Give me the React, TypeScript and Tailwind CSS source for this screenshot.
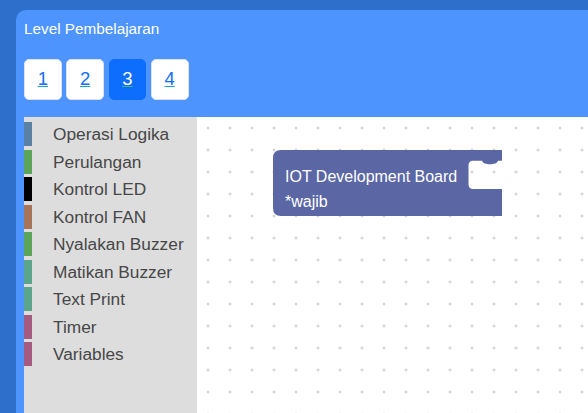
const levels = ["1", "2", "3", "4"];

const categories = [
  { name: "Operasi Logika", color: "bg-[#5b80a5]" },
  { name: "Perulangan", color: "bg-[#5ba55b]" },
  { name: "Kontrol LED", color: "bg-[#000000]" },
  { name: "Kontrol FAN", color: "bg-[#a5745b]" },
  { name: "Nyalakan Buzzer", color: "bg-[#5ba55b]" },
  { name: "Matikan Buzzer", color: "bg-[#5ba58c]" },
  { name: "Text Print", color: "bg-[#5ba58c]" },
  { name: "Timer", color: "bg-[#a55b80]" },
  { name: "Variables", color: "bg-[#a55b80]" },
];

function GridDots() {
  return (
    <svg className="absolute inset-0 h-full w-full" aria-hidden>
      <defs>
        <pattern id="dots" width="22" height="22" patternUnits="userSpaceOnUse">
          <path d="M9.5 11h3M11 9.5v3" stroke="#c8c8c8" strokeWidth="1" />
        </pattern>
      </defs>
      <rect width="100%" height="100%" fill="url(#dots)" />
    </svg>
  );
}

function BoardBlock() {
  return (
    <div className="absolute left-[76px] top-[33px] h-[66px] w-[229px]">
      <svg className="absolute inset-0" width="229" height="66" viewBox="0 0 229 66">
        <path
          d="M8 0H229V10.7H225C224 15.5 210 15.5 209 10.7H200Q195.5 10.7 195.5 15.5V34Q195.5 39 200 39H229V66H8Q0 66 0 58V8Q0 0 8 0Z"
          fill="#5b67a5"
        />
      </svg>
      <div className="relative pl-[12px] pt-[14px] text-[16px] leading-[25px] text-white">
        <div>IOT Development Board</div>
        <div>*wajib</div>
      </div>
    </div>
  );
}

export default function App() {
  return (
    <div className="h-[413px] w-[588px] overflow-hidden bg-[#2e6fcc] pl-[16px] pt-[10px] font-['Liberation_Sans',Arial,sans-serif]">
      <div className="flex h-full flex-col rounded-tl-[10px] bg-[#4e94fe]">
        <div className="pl-[8px] pt-[9.5px] text-[15.3px] leading-[18px] text-white">Level Pembelajaran</div>

        <div className="mt-[21px] flex gap-[4.6px] pl-[8px]">
          {levels.map((lv) => (
            <button
              key={lv}
              className={
                lv === "3"
                  ? "flex h-[41px] w-[37.7px] items-center justify-center rounded-[5px] border border-[#0d6efd] bg-[#0d6efd] text-[18.5px] text-white underline decoration-[#3fb58c]"
                  : "flex h-[41px] w-[37.7px] items-center justify-center rounded-[5px] border border-[#dee2e6] bg-white text-[18.5px] text-[#0d6efd] underline decoration-[#1aa6b7]"
              }
            >
              {lv}
            </button>
          ))}
        </div>

        <div className="mt-[17.7px] ml-[8px] flex flex-1">
          <div className="w-[173px] bg-[#dddddd] pt-[5px]">
            {categories.map((c) => (
              <div key={c.name} className="mb-[3.5px] flex h-[24px] items-center">
                <div className={`h-[24px] w-[8px] ${c.color}`} />
                <span className="whitespace-nowrap pl-[21px] text-[17.3px] leading-[24px] text-[#474747]">{c.name}</span>
              </div>
            ))}
          </div>
          <div className="relative flex-1 bg-white">
            <GridDots />
            <BoardBlock />
          </div>
        </div>
      </div>
    </div>
  );
}
